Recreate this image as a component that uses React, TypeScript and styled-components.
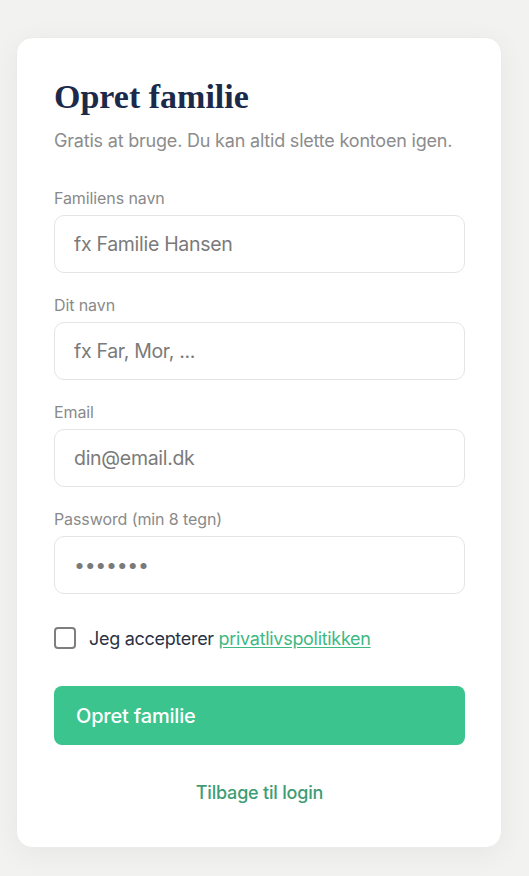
import React from "react";
import styled, { createGlobalStyle } from "styled-components";

const Global = createGlobalStyle`
  html, body { margin: 0; padding: 0; background: #f2f3f1; }
  body { font-family: Inter, "Noto Sans", sans-serif; }
  * { box-sizing: border-box; }
`;

const Page = styled.div`
  min-height: 876px;
  padding: 37px 27px 30px 16px;
  display: flex;
  align-items: flex-start;
`;

const Card = styled.form`
  width: 486px;
  background: #fff;
  border-radius: 16px;
  border: 1px solid #ebecea;
  box-shadow: 0 6px 30px rgba(0, 0, 0, 0.05);
  padding: 36px 36px 44px 37px;
  display: flex;
  flex-direction: column;
`;

const Title = styled.h1`
  margin: 0;
  font-family: "Liberation Serif", "DejaVu Serif", serif;
  font-weight: 700;
  font-size: 34px;
  line-height: 46px;
  color: #1b2a4a;
`;

const Subtitle = styled.p`
  margin: 8px 0 0 0;
  font-size: 18px;
  line-height: 26px;
  color: #8c8c8c;
  letter-spacing: -0.2px;
`;

const Fields = styled.div`
  margin-top: 33px;
  display: flex;
  flex-direction: column;
  gap: 21px;
`;

const Field = styled.label`
  display: flex;
  flex-direction: column;
  gap: 6px;
`;

const Label = styled.span`
  font-size: 16px;
  line-height: 22px;
  color: #8a8a8a;
  letter-spacing: -0.1px;
`;

const Input = styled.input`
  height: 58px;
  width: 100%;
  border: 1px solid #e4e5e3;
  border-radius: 10px;
  padding: 0 19px;
  font-family: inherit;
  font-size: 19.5px;
  color: #333;
  background: #fff;
  letter-spacing: -0.3px;
  outline: none;
  &::placeholder { color: #7a7a7a; }
`;

const Consent = styled.label`
  margin-top: 33px;
  display: flex;
  align-items: center;
  gap: 13px;
  font-size: 18px;
  color: #2a3245;
  letter-spacing: -0.3px;
`;

const Box = styled.span`
  width: 22px;
  height: 22px;
  border: 2px solid #7e7e7e;
  border-radius: 4px;
  flex: none;
`;

const Link = styled.a`
  color: #3fb883;
  text-decoration: underline;
  text-underline-offset: 2px;
`;

const Button = styled.button`
  margin-top: 37px;
  height: 59px;
  width: 100%;
  border: none;
  border-radius: 8px;
  background: #3bc48e;
  color: #fff;
  font-family: inherit;
  font-size: 20px;
  font-weight: 500;
  text-align: left;
  padding: 0 22px;
  letter-spacing: -0.2px;
`;

const Back = styled.a`
  margin-top: 37px;
  align-self: center;
  font-size: 18px;
  font-weight: 500;
  color: #3e9d74;
  letter-spacing: -0.2px;
  text-decoration: none;
`;

const fields = [
  { label: "Familiens navn", placeholder: "fx Familie Hansen", type: "text" },
  { label: "Dit navn", placeholder: "fx Far, Mor, ...", type: "text" },
  { label: "Email", placeholder: "din@email.dk", type: "email" },
  { label: "Password (min 8 tegn)", placeholder: "•••••••", type: "text" },
];

export default function App() {
  return (
    <>
      <Global />
      <Page>
        <Card onSubmit={(e) => e.preventDefault()}>
          <Title>Opret familie</Title>
          <Subtitle>Gratis at bruge. Du kan altid slette kontoen igen.</Subtitle>
          <Fields>
            {fields.map((f) => (
              <Field key={f.label}>
                <Label>{f.label}</Label>
                <Input type={f.type} placeholder={f.placeholder} />
              </Field>
            ))}
          </Fields>
          <Consent>
            <Box />
            <span>
              Jeg accepterer <Link href="#">privatlivspolitikken</Link>
            </span>
          </Consent>
          <Button type="submit">Opret familie</Button>
          <Back href="#">Tilbage til login</Back>
        </Card>
      </Page>
    </>
  );
}
